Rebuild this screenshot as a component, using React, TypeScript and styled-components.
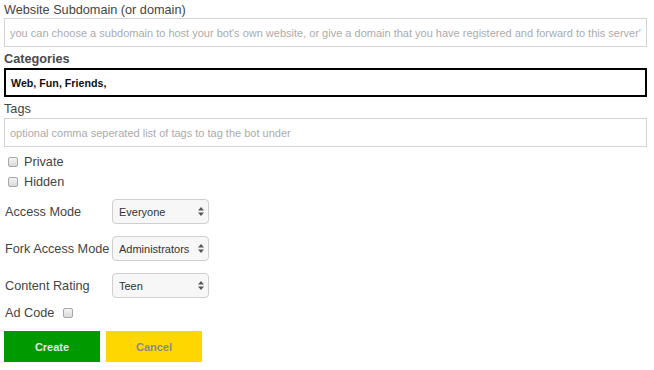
import styled, { createGlobalStyle } from "styled-components";

const GlobalStyle = createGlobalStyle`
    body {
        margin: 0;
        background: #ffffff;
        font-family: "Liberation Sans", Arial, Helvetica, sans-serif;
    }
`;

const Page = styled.div`
    padding: 2px 7px 0 4px;
    color: #444;
`;

const Label = styled.div<{ $bold?: boolean; $gap?: number }>`
    font-size: 12.7px;
    line-height: ${(p) => (p.$gap ? "17px" : "16px")};
    margin-top: ${(p) => p.$gap || 0}px;
    font-weight: ${(p) => (p.$bold ? 700 : 400)};
    color: ${(p) => (p.$bold ? "#4a4a4a" : "#444")};
`;

const TextInput = styled.input`
    display: block;
    width: 100%;
    height: 29px;
    box-sizing: border-box;
    border: 1px solid #d4d4d4;
    padding: 0 5px;
    font-family: inherit;
    font-size: 11px;
    color: #333;
    outline: none;

    &::placeholder {
        color: #ababab;
    }
`;

const CategoryBox = styled.div`
    height: 29px;
    box-sizing: border-box;
    border: 2px solid #000;
    padding: 0 5px;
    display: flex;
    align-items: center;
    font-size: 10.7px;
    font-weight: 700;
    color: #111;
`;

const CheckList = styled.div`
    margin-top: 5px;
`;

const CheckRow = styled.label`
    display: flex;
    align-items: center;
    gap: 6px;
    height: 20px;
    padding-left: 4px;
    font-size: 12.7px;
`;

const Check = styled.input.attrs({ type: "checkbox" })`
    appearance: none;
    margin: 0;
    width: 10px;
    height: 10px;
    border: 1px solid #a8a8a8;
    border-radius: 2px;
    background: linear-gradient(#f4f4f4, #d9d9d9);
`;

const Fields = styled.div`
    margin-top: 7px;
    display: flex;
    flex-direction: column;
    gap: 12px;
`;

const FieldRow = styled.div`
    display: flex;
    align-items: center;
    height: 25px;
`;

const FieldLabel = styled.span`
    width: 108px;
    padding-left: 1px;
    box-sizing: border-box;
    font-size: 12.7px;
    white-space: nowrap;
`;

const SelectWrap = styled.div`
    position: relative;
    width: 97px;
    height: 25px;
`;

const Select = styled.select`
    appearance: none;
    width: 100%;
    height: 100%;
    box-sizing: border-box;
    border: 1px solid #cfcfcf;
    border-radius: 4px;
    background: #f7f7f7;
    padding: 0 0 0 6px;
    font-family: inherit;
    font-size: 11px;
    color: #333;
    outline: none;
`;

const Arrows = styled.svg`
    position: absolute;
    right: 5px;
    top: 8px;
    pointer-events: none;
`;

const AdRow = styled.div`
    margin-top: 5px;
    height: 20px;
    display: flex;
    align-items: center;
    gap: 9px;
    padding-left: 1px;
    font-size: 12.7px;
`;

const Buttons = styled.div`
    margin-top: 8px;
    display: flex;
    gap: 6px;
`;

const Button = styled.button<{ $bg: string; $fg: string }>`
    width: 96px;
    height: 31px;
    border: none;
    background: ${(p) => p.$bg};
    color: ${(p) => p.$fg};
    font-family: inherit;
    font-size: 11px;
    font-weight: 700;
`;

const Dropdown = ({ value, options }: { value: string; options: string[] }) => (
    <SelectWrap>
        <Select defaultValue={value}>
            {options.map((o) => (
                <option key={o}>{o}</option>
            ))}
        </Select>
        <Arrows width="6" height="9" viewBox="0 0 6 9">
            <path d="M3 0 L6 3.5 H0 Z M3 9 L6 5.5 H0 Z" fill="#555" />
        </Arrows>
    </SelectWrap>
);

export default function App() {
    return (
        <Page>
            <GlobalStyle />
            <Label>Website Subdomain (or domain)</Label>
            <TextInput placeholder="you can choose a subdomain to host your bot's own website, or give a domain that you have registered and forward to this server's IP address" />

            <Label $bold $gap={4}>Categories</Label>
            <CategoryBox>Web, Fun, Friends,</CategoryBox>

            <Label $gap={4}>Tags</Label>
            <TextInput placeholder="optional comma seperated list of tags to tag the bot under" />

            <CheckList>
                <CheckRow>
                    <Check /> Private
                </CheckRow>
                <CheckRow>
                    <Check /> Hidden
                </CheckRow>
            </CheckList>

            <Fields>
                <FieldRow>
                    <FieldLabel>Access Mode</FieldLabel>
                    <Dropdown value="Everyone" options={["Everyone", "Users", "Members", "Administrators"]} />
                </FieldRow>
                <FieldRow>
                    <FieldLabel>Fork Access Mode</FieldLabel>
                    <Dropdown value="Administrators" options={["Everyone", "Users", "Members", "Administrators"]} />
                </FieldRow>
                <FieldRow>
                    <FieldLabel>Content Rating</FieldLabel>
                    <Dropdown value="Teen" options={["Everyone", "Teen", "Mature", "Adult"]} />
                </FieldRow>
            </Fields>

            <AdRow>
                Ad Code <Check />
            </AdRow>

            <Buttons>
                <Button $bg="#009a00" $fg="#e4e4e4">Create</Button>
                <Button $bg="#ffd700" $fg="#8a8a8a">Cancel</Button>
            </Buttons>
        </Page>
    );
}
